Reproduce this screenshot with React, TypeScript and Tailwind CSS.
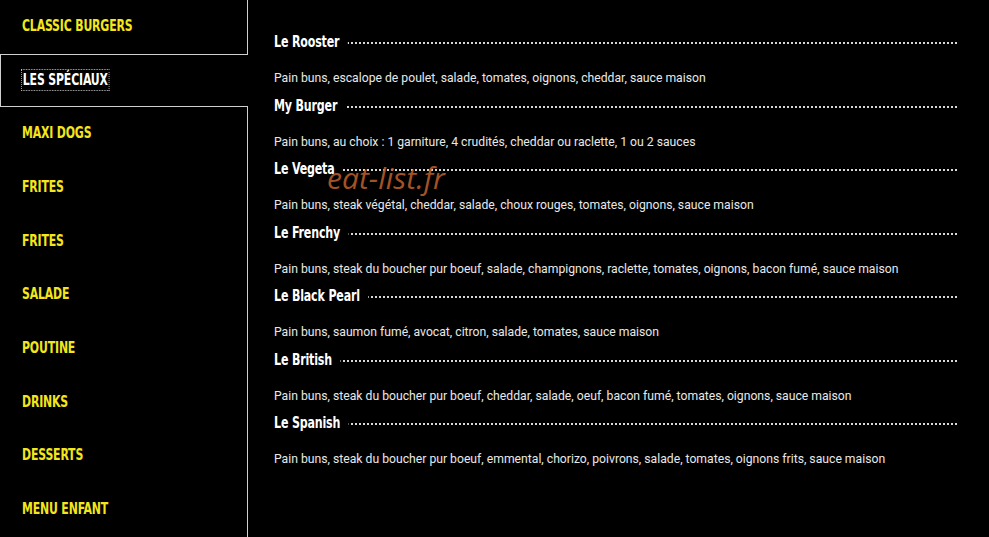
import React from 'react'

const categories = [
  'CLASSIC BURGERS',
  'LES SPÉCIAUX',
  'MAXI DOGS',
  'FRITES',
  'FRITES',
  'SALADE',
  'POUTINE',
  'DRINKS',
  'DESSERTS',
  'MENU ENFANT',
]

const specials = [
  { name: 'Le Rooster', desc: 'Pain buns, escalope de poulet, salade, tomates, oignons, cheddar, sauce maison' },
  { name: 'My Burger', desc: 'Pain buns, au choix : 1 garniture, 4 crudités, cheddar ou raclette, 1 ou 2 sauces' },
  { name: 'Le Vegeta', desc: 'Pain buns, steak végétal, cheddar, salade, choux rouges, tomates, oignons, sauce maison' },
  { name: 'Le Frenchy', desc: 'Pain buns, steak du boucher pur boeuf, salade, champignons, raclette, tomates, oignons, bacon fumé, sauce maison' },
  { name: 'Le Black Pearl', desc: 'Pain buns, saumon fumé, avocat, citron, salade, tomates, sauce maison' },
  { name: 'Le British', desc: 'Pain buns, steak du boucher pur boeuf, cheddar, salade, oeuf, bacon fumé, tomates, oignons, sauce maison' },
  { name: 'Le Spanish', desc: 'Pain buns, steak du boucher pur boeuf, emmental, chorizo, poivrons, salade, tomates, oignons frits, sauce maison' },
]

const active = 1

export default function App() {
  return (
    <div className="relative flex h-[537px] w-full overflow-hidden bg-black">
      {/* onglets verticaux */}
      <ul className="flex w-[248px] shrink-0 flex-col">
        {categories.map((c, i) => (
          <li
            key={i}
            className={
              i === active
                ? 'flex h-[54px] items-center border-y border-l border-[#d0d0d0] pb-[2px] pl-[21px]'
                : 'flex h-[54px] items-center border-r border-[#d0d0d0] pb-[2px] pl-[22px]'
            }
          >
            <span
              className={
                i === active
                  ? "origin-left scale-x-[0.81] px-px text-[15px] font-bold leading-[20px] tracking-[-0.2px] text-white outline-1 outline-dotted outline-[#bbb] [font-family:'DejaVu_Sans_Condensed',sans-serif]"
                  : "origin-left scale-x-[0.81] text-[15px] font-bold leading-[20px] tracking-[-0.2px] text-[#f3e61c] [font-family:'DejaVu_Sans_Condensed',sans-serif]"
              }
            >
              {c}
            </span>
          </li>
        ))}
      </ul>

      {/* liste des burgers */}
      <div className="flex flex-1 flex-col pl-[26px] pr-[32px] pt-[32px]">
        {specials.map((s) => (
          <div key={s.name} className="h-[63.5px]">
            <div className="grid h-5">
              <div className="col-start-1 row-start-1 mb-[8px] self-end border-b-2 border-dotted border-[#d8d8d8]" />
              <h4 className="col-start-1 row-start-1 origin-left scale-x-[0.82] justify-self-start bg-black pr-[10px] text-[15px] font-bold leading-5 tracking-[-0.2px] text-white [font-family:'DejaVu_Sans_Condensed',sans-serif]">
                {s.name}
              </h4>
            </div>
            <p className="mt-4 text-[12.2px] leading-5 text-[#e8e8e8] [font-family:Roboto,sans-serif]">
              {s.desc}
            </p>
          </div>
        ))}
      </div>

      <span className="pointer-events-none absolute left-[327px] top-[160px] text-[30px] italic leading-9 text-[#c2622c]/85 [font-family:'Open_Sans',sans-serif]">
        eat-list.fr
      </span>
    </div>
  )
}
